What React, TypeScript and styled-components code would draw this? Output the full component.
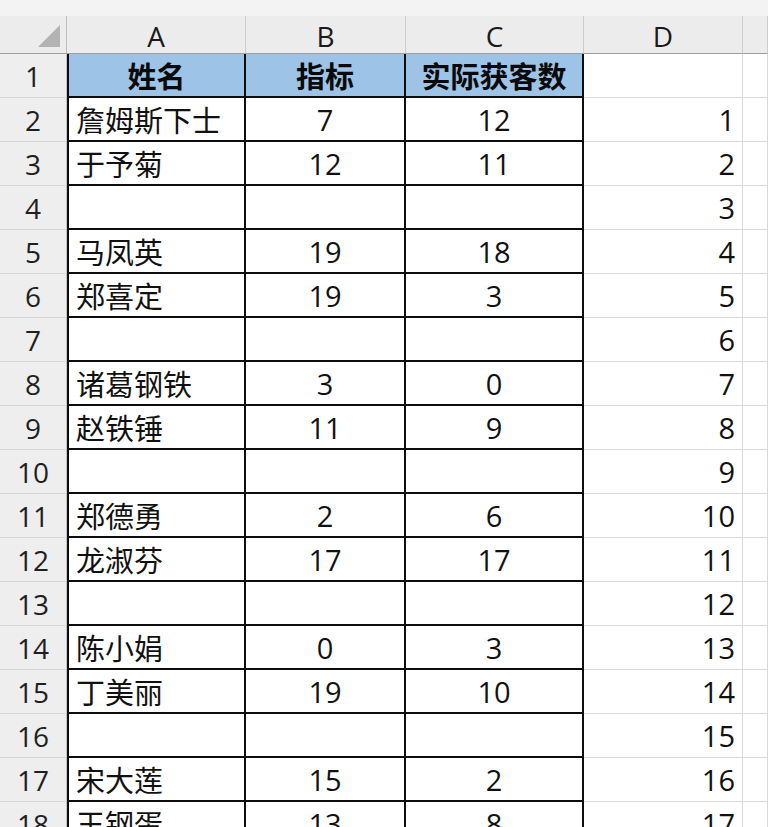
import React from "react";
import styled, { createGlobalStyle, css } from "styled-components";

const Global = createGlobalStyle`
  html, body {
    margin: 0;
    padding: 0;
    background: #ffffff;
    overflow: hidden;
    height: 827px;
  }
  * { box-sizing: border-box; }
`;

const Sheet = styled.div`
  display: grid;
  grid-template-columns: 67px 179px 160px 178px 159px 1fr;
  grid-template-rows: 16px 38px repeat(18, 44px);
  width: 768px;
  font-family: "Open Sans", "Noto Sans CJK SC", sans-serif;
  font-size: 29px;
  color: #111;
`;

const TopStrip = styled.div`
  grid-column: 1 / -1;
  background: #f3f3f3;
`;

const Corner = styled.div`
  background: #ececec;
  border-right: 1px solid #bdbdbd;
  border-bottom: 1px solid #9e9e9e;
  display: flex;
  align-items: flex-end;
  justify-content: flex-end;
  padding: 0 6px 6px 0;
`;

const ColHead = styled.div`
  background: #ececec;
  border-right: 1px solid #cdcdcd;
  border-bottom: 1px solid #9e9e9e;
  display: flex;
  align-items: center;
  justify-content: center;
  color: #1a1a1a;
  font-size: 28px;
  padding-top: 2px;
`;

const RowHead = styled.div`
  background: #eeeeee;
  border-right: 1px solid #c4c4c4;
  border-bottom: 1px solid #d6d6d6;
  display: flex;
  align-items: center;
  justify-content: center;
  color: #1f1f1f;
  font-size: 28px;
`;

type Align = "left" | "center" | "right";

const Cell = styled.div<{ $table?: boolean; $first?: boolean; $head?: boolean; $align: Align }>`
  display: flex;
  align-items: center;
  white-space: nowrap;
  overflow: hidden;
  justify-content: ${(p) =>
    p.$align === "left" ? "flex-start" : p.$align === "right" ? "flex-end" : "center"};
  padding: 0 ${(p) => (p.$align === "right" ? "7px" : "0")} 0 ${(p) => (p.$align === "left" ? "7px" : "0")};
  background: #ffffff;
  border-right: 1px solid #d9d9d9;
  border-bottom: 1px solid #d9d9d9;
  ${(p) =>
    p.$table &&
    css`
      border-right: 2px solid #0d0d0d;
      border-bottom: 2px solid #0d0d0d;
    `}
  ${(p) =>
    p.$first &&
    css`
      border-left: 2px solid #0d0d0d;
    `}
  ${(p) =>
    p.$head &&
    css`
      background: #9dc3e6;
      font-weight: 700;
      color: #0a0a0a;
    `}
`;

const rows: [string, string, string][] = [
  ["姓名", "指标", "实际获客数"],
  ["詹姆斯下士", "7", "12"],
  ["于予菊", "12", "11"],
  ["", "", ""],
  ["马凤英", "19", "18"],
  ["郑喜定", "19", "3"],
  ["", "", ""],
  ["诸葛钢铁", "3", "0"],
  ["赵铁锤", "11", "9"],
  ["", "", ""],
  ["郑德勇", "2", "6"],
  ["龙淑芬", "17", "17"],
  ["", "", ""],
  ["陈小娟", "0", "3"],
  ["丁美丽", "19", "10"],
  ["", "", ""],
  ["宋大莲", "15", "2"],
  ["王钢蛋", "13", "8"],
];

export default function App() {
  return (
    <>
      <Global />
      <Sheet>
        <TopStrip />
        <Corner>
          <svg width="22" height="22" viewBox="0 0 22 22">
            <polygon points="22,0 22,22 0,22" fill="#b3b3b3" />
          </svg>
        </Corner>
        {["A", "B", "C", "D", ""].map((c, i) => (
          <ColHead key={i}>{c}</ColHead>
        ))}
        {rows.map((r, i) => {
          const head = i === 0;
          return (
            <React.Fragment key={i}>
              <RowHead>{i + 1}</RowHead>
              <Cell $table $first $head={head} $align={head ? "center" : "left"}>
                {r[0]}
              </Cell>
              <Cell $table $head={head} $align="center">
                {r[1]}
              </Cell>
              <Cell $table $head={head} $align="center">
                {r[2]}
              </Cell>
              <Cell $align="right">{i === 0 ? "" : String(i)}</Cell>
              <Cell $align="right" />
            </React.Fragment>
          );
        })}
      </Sheet>
    </>
  );
}
